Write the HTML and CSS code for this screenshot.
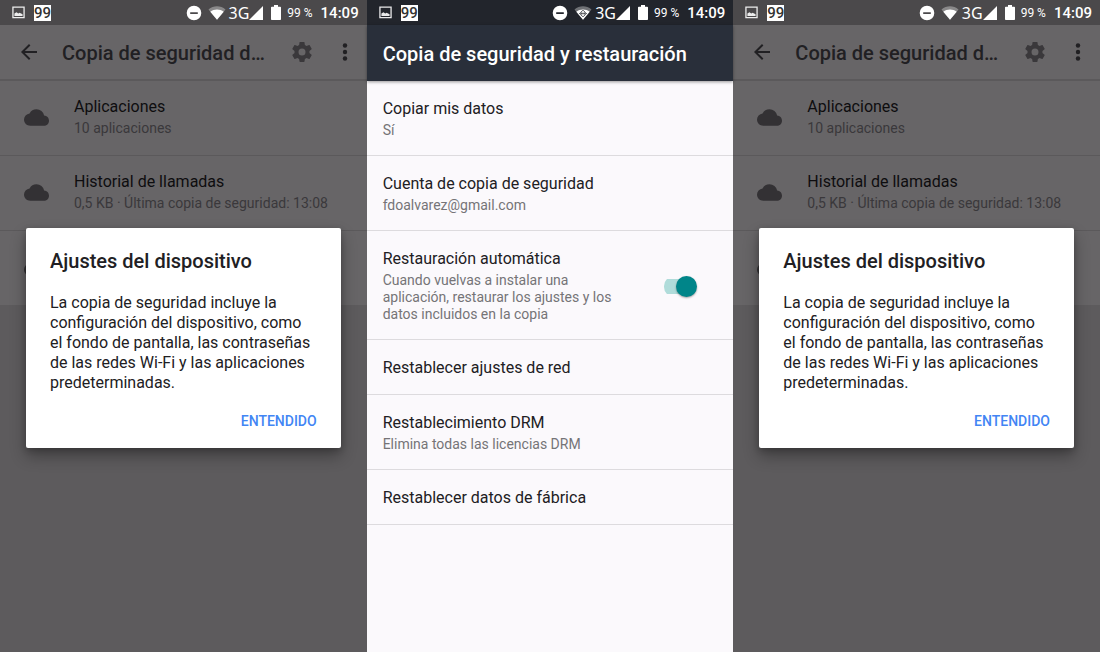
FILE: index.html
```html
<!DOCTYPE html>
<html lang="es">
<head>
<meta charset="utf-8">
<meta name="viewport" content="width=device-width, initial-scale=1">
<title>Copia de seguridad y restauración</title>
<link rel="stylesheet" href="styles.css">
</head>
<body>
<svg class="sprite" aria-hidden="true">
  <symbol id="picture" viewBox="0 0 14 14"><path fill="none" stroke="currentColor" stroke-width="1.4" d="M1 1.2h12v11.4H1z"/><path fill="currentColor" d="M2.6 10.8V8.2l2.2-1.6 2 1.5 1.4-.8L11.400 9v1.800z"/></symbol>
  <symbol id="minus" viewBox="0 0 16 16"><path fill="currentColor" fill-rule="evenodd" d="M8 .7a7.300 7.300 0 1 0 0 14.600A7.300 7.300 0 0 0 8 .7zM4.200 7.200h7.600v1.700H4.200z"/></symbol>
  <symbol id="wifi" viewBox="0 0 18 14"><path fill="currentColor" opacity=".35" d="M.5 3.500C5.500-.8 12.500-.8 17.500 3.500L9 13.800z"/><path fill="currentColor" d="M2.300 5.700c3.800-3 9.600-3 13.400 0L9 13.800z"/></symbol>
  <symbol id="wifi-busy" viewBox="0 0 18 14"><path fill="currentColor" opacity=".35" d="M.5 3.500C5.500-.8 12.500-.8 17.500 3.500L9 13.800z"/><path fill="currentColor" d="M2.300 5.700c3.800-3 9.600-3 13.400 0L9 13.800z"/><path fill="none" stroke="#22252c" stroke-width=".6" d="M5.500 7.500L9 4l3.500 3.500L9 11zM5.500 7.500h7M7.800 5.500v4M10.200 5.500v4"/></symbol>
  <symbol id="signal" viewBox="0 0 14 14"><path fill="currentColor" d="M14 0v14H0z"/></symbol>
  <symbol id="battery" viewBox="0 0 10 15"><path fill="currentColor" d="M3 0h4v1.700h2.200a.8.8 0 0 1 .8.800v11.700a.8.800 0 0 1-.8.800H.8a.8.800 0 0 1-.8-.8V2.500a.8.800 0 0 1 .8-.8H3z"/></symbol>
  <symbol id="back" viewBox="0 0 24 24"><path fill="currentColor" d="M20 11H7.830l5.590-5.590L12 4l-8 8 8 8 1.410-1.410L7.830 13H20z"/></symbol>
  <symbol id="gear" viewBox="0 0 24 24"><path fill="currentColor" d="M19.430 12.980c.04-.32.07-.64.07-.98s-.03-.66-.07-.98l2.110-1.650c.19-.15.24-.42.12-.64l-2-3.460c-.12-.22-.39-.3-.61-.22l-2.490 1c-.52-.4-1.080-.73-1.690-.98l-.38-2.650C14.460 2.180 14.250 2 14 2h-4c-.25 0-.46.18-.49.42l-.38 2.650c-.61.25-1.170.59-1.690.98l-2.490-1c-.23-.09-.49 0-.61.22l-2 3.460c-.13.22-.07.49.12.64l2.110 1.650c-.04.32-.07.65-.07.98s.03.66.07.98l-2.110 1.650c-.19.15-.24.42-.12.64l2 3.460c.12.22.39.3.61.22l2.490-1c.52.4 1.080.73 1.690.98l.38 2.650c.03.24.24.42.49.42h4c.25 0 .46-.18.49-.42l.38-2.650c.61-.25 1.170-.59 1.690-.98l2.490 1c.23.09.49 0 .61-.22l2-3.460c.12-.22.07-.49-.12-.64zM12 15.500A3.500 3.500 0 1 1 12 8.500a3.500 3.500 0 0 1 0 7z"/></symbol>
  <symbol id="more" viewBox="0 0 24 24"><g fill="currentColor"><circle cx="12" cy="5.500" r="2.200"/><circle cx="12" cy="12" r="2.200"/><circle cx="12" cy="18.500" r="2.200"/></g></symbol>
  <symbol id="cloud" viewBox="0 0 24 24"><path fill="currentColor" d="M19.350 10.040A7.490 7.490 0 0 0 12 4 7.480 7.480 0 0 0 5.350 8.040 5.994 5.994 0 0 0 0 14c0 3.310 2.690 6 6 6h13c2.760 0 5-2.240 5-5 0-2.640-2.050-4.780-4.650-4.960z"/></symbol>
</svg>
<main class="screens">
  <section class="screen dimmed">
    <div class="status">
      <svg class="i-picture"><use href="#picture"/></svg><span class="badge">99</span>
      <svg class="i-minus"><use href="#minus"/></svg><svg class="i-wifi"><use href="#wifi"/></svg><span class="net">3G</span><svg class="i-signal"><use href="#signal"/></svg><svg class="i-battery"><use href="#battery"/></svg><span class="charge">99 %</span><time class="clock">14:09</time>
    </div>
    <header class="bar">
      <button class="icon-button" aria-label="Atrás"><svg><use href="#back"/></svg></button>
      <h1 class="heading">Copia de seguridad d…</h1>
      <button class="icon-button gear" aria-label="Ajustes"><svg><use href="#gear"/></svg></button>
      <button class="icon-button more" aria-label="Más opciones"><svg><use href="#more"/></svg></button>
    </header>
    <ul class="list">
      <li class="row"><svg class="cloud"><use href="#cloud"/></svg><div class="copy"><h2 class="title">Aplicaciones</h2><p class="detail">10 aplicaciones</p></div></li>
      <li class="row"><svg class="cloud"><use href="#cloud"/></svg><div class="copy"><h2 class="title">Historial de llamadas</h2><p class="detail">0,5 KB · Última copia de seguridad: 13:08</p></div></li>
      <li class="row"><svg class="cloud"><use href="#cloud"/></svg></li>
    </ul>
    <div class="overlay">
      <div class="dialog" role="dialog" aria-labelledby="dialog-a">
        <h2 class="dialog-title" id="dialog-a">Ajustes del dispositivo</h2>
        <p class="dialog-text">La copia de seguridad incluye la configuración del dispositivo, como el fondo de pantalla, las contraseñas de las redes Wi-Fi y las aplicaciones predeterminadas.</p>
        <button class="confirm">ENTENDIDO</button>
      </div>
    </div>
  </section>

  <section class="screen settings">
    <div class="status">
      <svg class="i-picture"><use href="#picture"/></svg><span class="badge">99</span>
      <svg class="i-minus"><use href="#minus"/></svg><svg class="i-wifi"><use href="#wifi-busy"/></svg><span class="net">3G</span><svg class="i-signal"><use href="#signal"/></svg><svg class="i-battery"><use href="#battery"/></svg><span class="charge">99 %</span><time class="clock">14:09</time>
    </div>
    <header class="bar"><h1 class="heading">Copia de seguridad y restauración</h1></header>
    <ul class="list">
      <li class="row"><div class="copy"><h2 class="title">Copiar mis datos</h2><p class="detail">Sí</p></div></li>
      <li class="row"><div class="copy"><h2 class="title">Cuenta de copia de seguridad</h2><p class="detail">fdoalvarez@gmail.com</p></div></li>
      <li class="row"><label class="copy" for="auto"><span class="title">Restauración automática</span><span class="detail">Cuando vuelvas a instalar una aplicación, restaurar los ajustes y los datos incluidos en la copia</span></label><input class="switch" id="auto" type="checkbox" role="switch" checked></li>
      <li class="row"><div class="copy"><h2 class="title">Restablecer ajustes de red</h2></div></li>
      <li class="row"><div class="copy"><h2 class="title">Restablecimiento DRM</h2><p class="detail">Elimina todas las licencias DRM</p></div></li>
      <li class="row"><div class="copy"><h2 class="title">Restablecer datos de fábrica</h2></div></li>
    </ul>
  </section>

  <section class="screen dimmed">
    <div class="status">
      <svg class="i-picture"><use href="#picture"/></svg><span class="badge">99</span>
      <svg class="i-minus"><use href="#minus"/></svg><svg class="i-wifi"><use href="#wifi"/></svg><span class="net">3G</span><svg class="i-signal"><use href="#signal"/></svg><svg class="i-battery"><use href="#battery"/></svg><span class="charge">99 %</span><time class="clock">14:09</time>
    </div>
    <header class="bar">
      <button class="icon-button" aria-label="Atrás"><svg><use href="#back"/></svg></button>
      <h1 class="heading">Copia de seguridad d…</h1>
      <button class="icon-button gear" aria-label="Ajustes"><svg><use href="#gear"/></svg></button>
      <button class="icon-button more" aria-label="Más opciones"><svg><use href="#more"/></svg></button>
    </header>
    <ul class="list">
      <li class="row"><svg class="cloud"><use href="#cloud"/></svg><div class="copy"><h2 class="title">Aplicaciones</h2><p class="detail">10 aplicaciones</p></div></li>
      <li class="row"><svg class="cloud"><use href="#cloud"/></svg><div class="copy"><h2 class="title">Historial de llamadas</h2><p class="detail">0,5 KB · Última copia de seguridad: 13:08</p></div></li>
      <li class="row"><svg class="cloud"><use href="#cloud"/></svg></li>
    </ul>
    <div class="overlay">
      <div class="dialog" role="dialog" aria-labelledby="dialog-b">
        <h2 class="dialog-title" id="dialog-b">Ajustes del dispositivo</h2>
        <p class="dialog-text">La copia de seguridad incluye la configuración del dispositivo, como el fondo de pantalla, las contraseñas de las redes Wi-Fi y las aplicaciones predeterminadas.</p>
        <button class="confirm">ENTENDIDO</button>
      </div>
    </div>
  </section>
</main>
</body>
</html>
```
FILE: styles.css
```css
* { box-sizing: border-box; margin: 0; padding: 0; }
body { font-family: Roboto, "Liberation Sans", sans-serif; color: #212023; }
button { font: inherit; color: inherit; background: none; border: 0; cursor: pointer; }
.sprite { position: absolute; width: 0; height: 0; }

.screens { display: grid; grid-template-columns: repeat(3, minmax(0, 1fr)); min-height: 100vh; }
.screen { position: relative; display: flex; flex-direction: column; }
.dimmed { background: #5d5b5d; }
.settings { background: #fbf9fc; }

.status { display: flex; align-items: center; height: 25px; padding: 0 8px 0 12px; color: #fff; }
.status svg { flex: none; }
.dimmed .status { background: #4b494b; }
.settings .status { background: #22252c; }
.i-picture { width: 13px; height: 13px; opacity: .9; }
.badge { margin: 0 auto 0 9px; background: #fff; color: #333; font-size: 15px; line-height: 16px; font-weight: 500; }
.i-minus { width: 16px; height: 16px; }
.i-wifi { width: 18px; height: 14px; margin-left: 6px; }
.net { margin-left: 3px; font-family: "Noto Sans", sans-serif; font-size: 16px; line-height: 24px; }
.i-signal { width: 14px; height: 14px; }
.i-battery { width: 10px; height: 15px; margin-left: 8px; }
.charge { margin-left: 6px; font-size: 12px; }
.clock { margin-left: 8px; font-size: 15px; font-weight: 500; }

.bar { display: flex; align-items: center; height: 56px; padding: 2px 16px 0; }
.dimmed .bar { padding: 0 10px 0 17px; background: #676567; border-bottom: 2px solid #5b595b; }
.settings .bar { z-index: 1; background: #292f3a; color: #fff; box-shadow: 0 1px 3px rgba(0, 0, 0, .4); }
.heading { flex: 1; min-width: 0; white-space: nowrap; font-size: 20px; line-height: 28px; font-weight: 500; }
.dimmed .heading { margin: 2px 0 0 21px; }
.icon-button { width: 24px; height: 24px; flex: none; }
.icon-button svg { display: block; width: 24px; height: 24px; }
.gear { color: #3a383b; }
.more { margin-left: 19px; }

.list { list-style: none; }
.row { display: flex; align-items: center; padding: 18px 16px 16px; border-bottom: 1px solid #dddbde; }
.copy { display: flex; flex-direction: column; gap: 3px; flex: 1; min-width: 0; }
.title { font-size: 16px; line-height: 20px; font-weight: 400; }
.detail { font-size: 14px; line-height: 17px; color: #757477; }
.dimmed .row { height: 75px; padding: 15px 24px 17px; background: #676567; border-color: #5b595b; }
.dimmed .row:last-child { height: 74px; border: 0; }
.dimmed .title { color: #0e0d0f; }
.dimmed .detail { color: #3a383b; }
.cloud { flex: none; width: 25px; height: 25px; margin-right: 25px; color: #333134; }

.switch { appearance: none; flex: none; display: flex; align-items: center; justify-content: flex-end; width: 33px; height: 21px; margin: 0 20px 0 40px; background: linear-gradient(#b0dcda, #b0dcda) 0 50% / 30px 15px no-repeat; border-radius: 10px; }
.switch::before { content: ""; width: 21px; height: 21px; border-radius: 50%; background: #008589; box-shadow: 0 1px 2px rgba(0, 0, 0, .35); }

.overlay { position: absolute; inset: 24px 0 0; display: flex; align-items: center; padding: 0 26px; }
.dialog { display: flex; flex-direction: column; width: 100%; padding: 19px 24px 17px; background: #fff; border-radius: 2px; box-shadow: 0 8px 16px rgba(0, 0, 0, .32), 0 2px 6px rgba(0, 0, 0, .2); }
.dialog-title { font-size: 20px; line-height: 28px; font-weight: 500; }
.dialog-text { margin: 18px 0; font-size: 16px; line-height: 20px; }
.confirm { align-self: flex-end; font-size: 14px; line-height: 20px; font-weight: 500; color: #4285f4; }
```
